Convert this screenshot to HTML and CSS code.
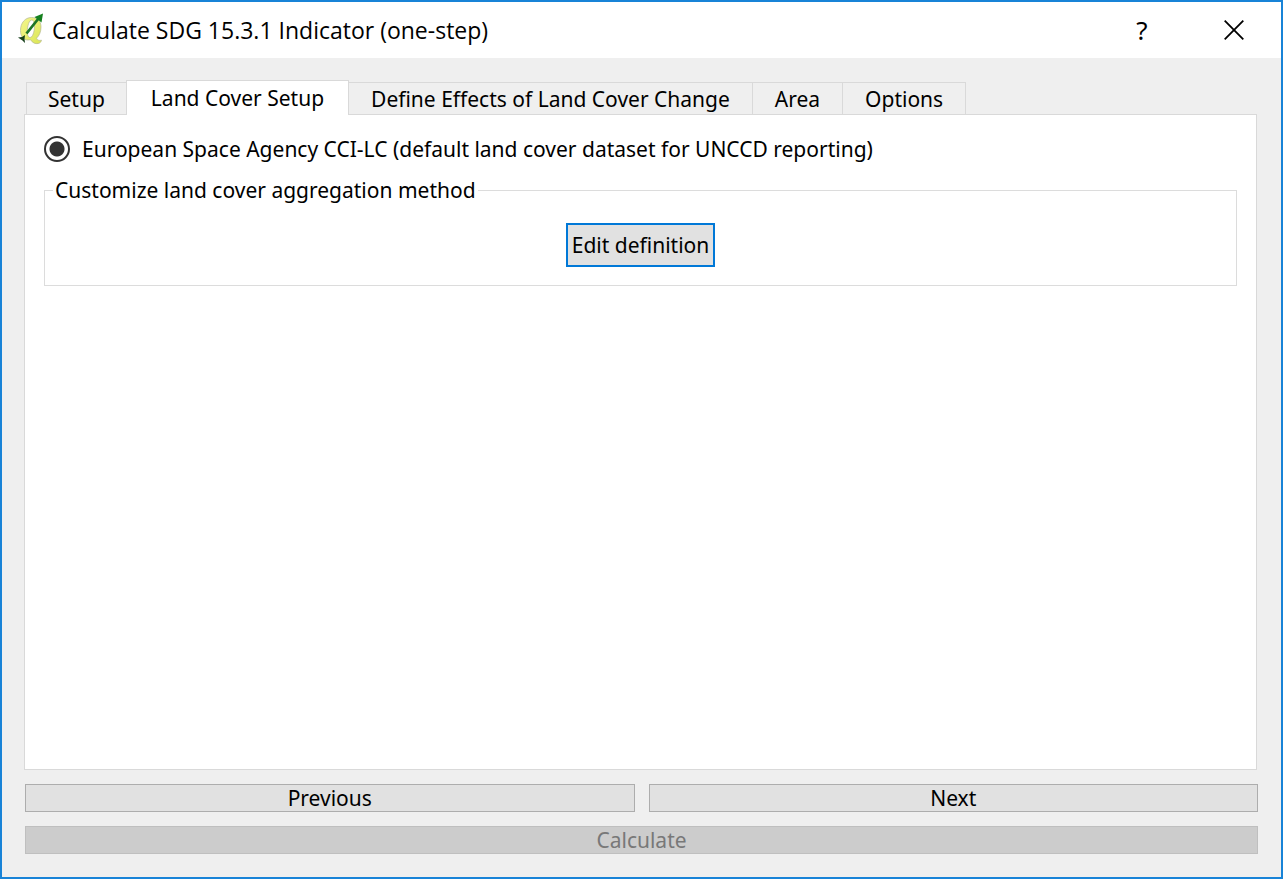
FILE: index.html
```html
<!DOCTYPE html>
<html lang="en">
<head>
<meta charset="utf-8">
<meta name="viewport" content="width=device-width, initial-scale=1">
<title>Calculate SDG 15.3.1 Indicator (one-step)</title>
<link rel="stylesheet" href="styles.css">
</head>
<body>
<div class="window">
  <header class="titlebar">
    <svg class="app-icon" viewBox="0 0 28 34" aria-hidden="true">
      <defs>
        <linearGradient id="leaf" x1="0" y1="0" x2="1" y2="1">
          <stop offset="0" stop-color="#f4f68e"/>
          <stop offset="1" stop-color="#dbe654"/>
        </linearGradient>
      </defs>
      <path d="M13.500 4.500C7 4.500 2.500 10 2.500 17.500c0 6 3 9.500 7.500 9.500l2.500-.3c2 3 4.500 4.500 8 3.800 1.500-.5 2.500-1.500 3-3.300-2.500.6-4 0-5-2C21.500 22.500 23 18.500 23 14 23 8 19.500 4.500 13.500 4.500zM13.800 7c1.800 0 2.700 2.500 2.700 6 0 6-2 11.500-4.500 11.500-1.800 0-2.700-2.500-2.700-6C9.300 12.500 11.300 7 13.800 7z" fill="url(#leaf)" fill-rule="evenodd" stroke="#b4b890" stroke-width=".7"/>
      <path d="M8.500 20.500 20.500 5.500" stroke="#1c7427" stroke-width="2.800"/>
      <path d="M25 .5 23.500 9.500 16.500 4z" fill="#15801e"/>
      <path d="M0 24.500l4-.5 3-2-.5 4 .5 4-2.500-2.500z" fill="#143d18"/>
    </svg>
    <h1 class="title">Calculate SDG 15.3.1 Indicator (one-step)</h1>
    <button class="title-button" type="button" aria-label="Help">?</button>
    <button class="title-button" type="button" aria-label="Close">
      <svg class="close-icon" viewBox="0 0 20 20" aria-hidden="true"><path d="M.7.700 19.300 19.300M19.300.700.700 19.300" stroke="#000" stroke-width="1.800" fill="none"/></svg>
    </button>
  </header>
  <main class="content">
    <div class="tabs" role="tablist">
      <button class="tab" type="button" role="tab">Setup</button>
      <button class="tab tab-active" type="button" role="tab" aria-selected="true">Land Cover Setup</button>
      <button class="tab" type="button" role="tab">Define Effects of Land Cover Change</button>
      <button class="tab" type="button" role="tab">Area</button>
      <button class="tab" type="button" role="tab">Options</button>
    </div>
    <section class="panel" role="tabpanel">
      <label class="option">
        <input class="radio" type="radio" name="dataset" checked>
        <span>European Space Agency CCI-LC (default land cover dataset for UNCCD reporting)</span>
      </label>
      <fieldset class="group">
        <legend class="legend">Customize land cover aggregation method</legend>
        <button class="edit-button" type="button">Edit definition</button>
      </fieldset>
    </section>
    <div class="actions">
      <button class="button" type="button">Previous</button>
      <button class="button" type="button">Next</button>
      <button class="button button-wide" type="button" disabled>Calculate</button>
    </div>
  </main>
</div>
</body>
</html>
```
FILE: styles.css
```css
* { box-sizing: border-box; }

body {
  margin: 0;
  font: 21px/26px "Noto Sans", sans-serif;
  color: #000;
}

button {
  font: inherit;
  color: inherit;
  margin: 0;
}

.window {
  display: flex;
  flex-direction: column;
  min-height: 100vh;
  border: 2px solid #1883d7;
  background: #efefef;
}

.titlebar {
  display: flex;
  align-items: center;
  height: 56px;
  padding: 0 1px 0 16px;
  background: #fff;
}

.app-icon {
  width: 28px;
  height: 34px;
}

.title {
  flex: 1;
  margin: 0 0 0 6px;
  font: 23px/30px "Open Sans", sans-serif;
}

.title-button {
  display: flex;
  align-items: center;
  justify-content: center;
  width: 92px;
  height: 54px;
  padding: 0;
  border: 0;
  background: none;
  font-size: 26px;
}

.close-icon {
  width: 20px;
  height: 20px;
}

.content {
  flex: 1;
  display: flex;
  flex-direction: column;
  padding: 22px 23px 23px 22px;
}

.tabs {
  display: flex;
  align-items: flex-end;
  padding-left: 2px;
}

.tab {
  height: 32px;
  padding: 3px 22px;
  border: 1px solid #d9d9d9;
  border-width: 1px 1px 0 0;
  background: #efefef;
  white-space: nowrap;
}

.tab:first-child {
  padding: 3px 21px;
  border-left-width: 1px;
}

.tab-active {
  z-index: 1;
  height: 35px;
  margin: 0 0 -1px -1px;
  padding: 4px 24px;
  border-left-width: 1px;
  background: #fff;
}

.panel {
  flex: 1;
  margin-right: 1px;
  padding: 20px 19px;
  border: 1px solid #d9d9d9;
  background: #fff;
  line-height: 28px;
}

.option {
  display: flex;
  align-items: center;
  gap: 12px;
}

.radio {
  appearance: none;
  width: 26px;
  height: 26px;
  margin: 0;
  border: 2px solid #333;
  border-radius: 50%;
  background: radial-gradient(circle, #333 7px, #fff 8px);
}

.group {
  margin: 13px 0 0;
  padding: 19px 8px 18px;
  border: 1px solid #dcdcdc;
}

.legend {
  padding: 0 2px;
}

.edit-button {
  display: block;
  height: 44px;
  margin: 0 auto;
  padding: 0 4px;
  border: 2px solid #0078d7;
  background: #e1e1e1;
}

.actions {
  display: grid;
  grid-template-columns: 1fr 1fr;
  gap: 14px;
  margin: 14px 0 0 1px;
}

.button {
  height: 28px;
  padding: 0;
  border: 1px solid #adadad;
  background: #e1e1e1;
}

.button-wide { grid-column: 1 / -1; }

.button:disabled {
  border-color: #bfbfbf;
  background: #ccc;
  color: #787878;
}
```
